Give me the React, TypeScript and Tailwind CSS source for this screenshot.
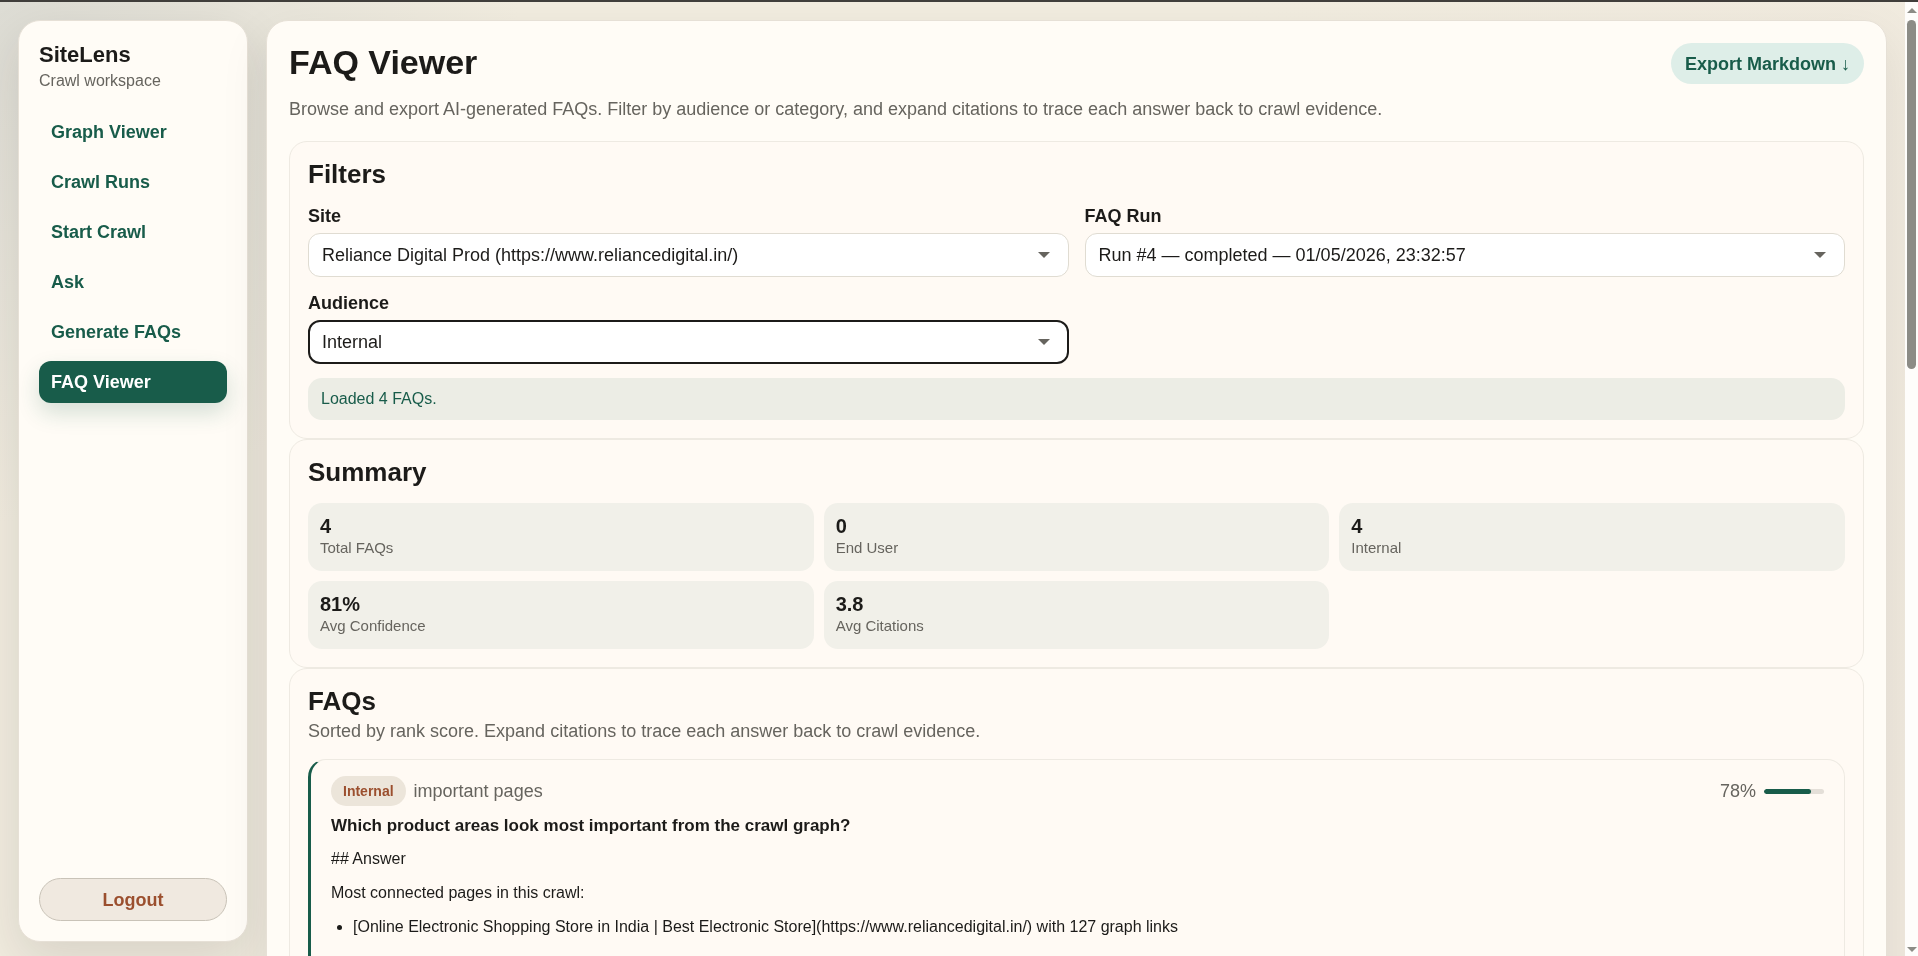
import { useId } from 'react';
import type { ReactNode } from 'react';

const navItems = [
  { name: 'Graph Viewer', href: '#graph' },
  { name: 'Crawl Runs', href: '#runs' },
  { name: 'Start Crawl', href: '#start' },
  { name: 'Ask', href: '#ask' },
  { name: 'Generate FAQs', href: '#generate' },
  { name: 'FAQ Viewer', href: '#faqs' },
];

const stats = [
  { value: '4', label: 'Total FAQs' },
  { value: '0', label: 'End User' },
  { value: '4', label: 'Internal' },
  { value: '81%', label: 'Avg Confidence' },
  { value: '3.8', label: 'Avg Citations' },
];

const faqs = [
  {
    audience: 'Internal',
    category: 'important pages',
    confidence: 78,
    question: 'Which product areas look most important from the crawl graph?',
    paragraphs: ['## Answer', 'Most connected pages in this crawl:'],
    bullets: [
      '[Online Electronic Shopping Store in India | Best Electronic Store](https://www.reliancedigital.in/) with 127 graph links',
    ],
  },
];

function Sidebar() {
  const active = '#faqs';

  return (
    <aside className="sticky top-0 flex h-[calc(100vh-34px)] w-[230px] shrink-0 flex-col rounded-[22px] border border-[#e6e0d6] bg-[#fffcf6] p-5 shadow-[0_18px_50px_rgba(29,28,26,0.12)]">
      <div className="text-[22px] leading-7 font-bold">SiteLens</div>
      <div className="text-base leading-6 text-[#66645e]">Crawl workspace</div>
      <nav className="mt-[18px] flex flex-col gap-2">
        {navItems.map((item) => (
          <a
            key={item.href}
            href={item.href}
            className={`rounded-xl px-3 py-2 text-lg leading-[26px] font-bold ${
              item.href === active
                ? 'bg-[#185c4a] text-white shadow-[0_10px_22px_rgba(24,92,74,0.18)]'
                : 'text-[#185c4a]'
            }`}
          >
            {item.name}
          </a>
        ))}
      </nav>
      <button
        type="button"
        className="mt-auto h-[43px] rounded-full border border-[#c9c3b8] bg-[#f0e9e0] text-lg font-bold text-[#9b4f2e]"
      >
        Logout
      </button>
    </aside>
  );
}

function Card({ title, children }: { title: string; children: ReactNode }) {
  return (
    <section className="rounded-[18px] border border-[#eeeae2] bg-[#fffaf4] p-[18px]">
      <h2 className="text-[26px] leading-[29px] font-bold">{title}</h2>
      {children}
    </section>
  );
}

function SelectField({ label, option, focused }: { label: string; option: string; focused?: boolean }) {
  const id = useId();

  return (
    <div className="flex flex-col gap-1.5">
      <label htmlFor={id} className="text-lg leading-[22px] font-bold">
        {label}
      </label>
      <div className="relative">
        <select
          id={id}
          className={`h-11 w-full appearance-none rounded-xl bg-white pr-12 text-lg text-[#1c1b19] ${
            focused ? 'border-2 border-[#1c1b19] pl-3' : 'border border-[#e0dcd2] pl-[13px]'
          }`}
        >
          <option>{option}</option>
        </select>
        <svg
          className="pointer-events-none absolute top-[19px] right-[19px]"
          width="12"
          height="6"
          viewBox="0 0 12 6"
          aria-hidden="true"
        >
          <path d="M0 0h12L6 6z" fill="#66645e" />
        </svg>
      </div>
    </div>
  );
}

function FaqItem({ faq }: { faq: (typeof faqs)[number] }) {
  return (
    <article className="mt-3.5 rounded-[18px] border border-l-[3px] border-[#eeeae2] border-l-[#185c4a] px-5 pt-4 pb-12">
      <div className="flex items-center justify-between">
        <div className="flex items-center gap-2">
          <span className="rounded-full bg-[#ece5da] px-3 text-sm leading-[30px] font-bold text-[#9b4f2e]">
            {faq.audience}
          </span>
          <span className="text-lg leading-7 text-[#66645e]">{faq.category}</span>
        </div>
        <div className="flex items-center gap-2">
          <span className="text-lg leading-7 text-[#66645e]">{faq.confidence}%</span>
          <div className="h-[5px] w-[60px] overflow-hidden rounded-full bg-[#e4dfd8]">
            <div className="h-full rounded-full bg-[#185c4a]" style={{ width: `${faq.confidence}%` }} />
          </div>
        </div>
      </div>
      <h3 className="mt-2 text-[17px] leading-6 font-bold">{faq.question}</h3>
      <div className="mt-2 flex flex-col gap-2 text-base leading-[26px]">
        {faq.paragraphs.map((text) => (
          <p key={text}>{text}</p>
        ))}
        <ul className="list-disc pl-[22px]">
          {faq.bullets.map((text) => (
            <li key={text}>{text}</li>
          ))}
        </ul>
      </div>
    </article>
  );
}

function Scrollbar() {
  return (
    <div className="flex w-[13px] shrink-0 flex-col items-center bg-[#fefdfb] pt-1.5 pb-1" aria-hidden="true">
      <svg width="10" height="5" viewBox="0 0 10 5">
        <path d="M0 5h10L5 0z" fill="#8c8c86" />
      </svg>
      <div className="mt-[7px] h-[37%] w-[9px] rounded-full bg-[#8c8c86]" />
      <svg className="mt-auto" width="10" height="5" viewBox="0 0 10 5">
        <path d="M0 0h10L5 5z" fill="#8c8c86" />
      </svg>
    </div>
  );
}

export default function App() {
  return (
    <div className="flex h-screen border-t-2 border-[#403e3b] bg-[#f1ecdf] font-['Liberation_Sans',Arial,sans-serif] text-[#1c1b19]">
      <div className="flex min-w-0 flex-1 items-start gap-[18px] overflow-y-auto bg-[radial-gradient(circle_at_top_left,#dddcd4,transparent_520px),linear-gradient(120deg,#f1ecdf_0%,#f1ecdf_50%,#f0e9de_100%)] p-[18px] [scrollbar-width:none]">
        <Sidebar />
        <main className="relative min-w-0 flex-1 rounded-[22px] border border-[#e6e0d6] bg-[#fffcf6] p-[22px] shadow-[0_18px_50px_rgba(29,28,26,0.08)]">
          <header className="flex items-start justify-between">
            <h1 className="text-[34px] leading-[38px] font-bold">FAQ Viewer</h1>
            <button
              type="button"
              className="h-[41px] rounded-full bg-[#deeee8] px-3.5 text-lg font-bold text-[#185c4a]"
            >
              Export Markdown ↓
            </button>
          </header>
          <p className="mt-3 mb-[18px] text-lg leading-[27px] text-[#66645e]">
            Browse and export AI-generated FAQs. Filter by audience or category, and expand citations to trace each
            answer back to crawl evidence.
          </p>

          <Card title="Filters">
            <div className="mt-4 grid grid-cols-2 gap-x-4 gap-y-[15px]">
              <SelectField label="Site" option="Reliance Digital Prod (https://www.reliancedigital.in/)" />
              <SelectField label="FAQ Run" option="Run #4 — completed — 01/05/2026, 23:32:57" />
              <SelectField label="Audience" option="Internal" focused />
            </div>
            <p role="status" className="mt-3.5 rounded-[14px] bg-[#ecede5] px-[13px] py-2 text-base leading-[26px] text-[#185c4a]">
              Loaded 4 FAQs.
            </p>
          </Card>

          <Card title="Summary">
            <dl className="mt-4 grid grid-cols-3 gap-2.5">
              {stats.map((stat) => (
                <div key={stat.label} className="flex flex-col-reverse rounded-[14px] bg-[#f1f0e9] p-3">
                  <dt className="text-[15px] leading-[22px] text-[#66645e]">{stat.label}</dt>
                  <dd className="text-xl leading-[22px] font-bold">{stat.value}</dd>
                </div>
              ))}
            </dl>
          </Card>

          <Card title="FAQs">
            <p className="mt-0.5 text-lg leading-[27px] text-[#66645e]">
              Sorted by rank score. Expand citations to trace each answer back to crawl evidence.
            </p>
            {faqs.map((faq) => (
              <FaqItem key={faq.question} faq={faq} />
            ))}
          </Card>
        </main>
      </div>
      <Scrollbar />
    </div>
  );
}
